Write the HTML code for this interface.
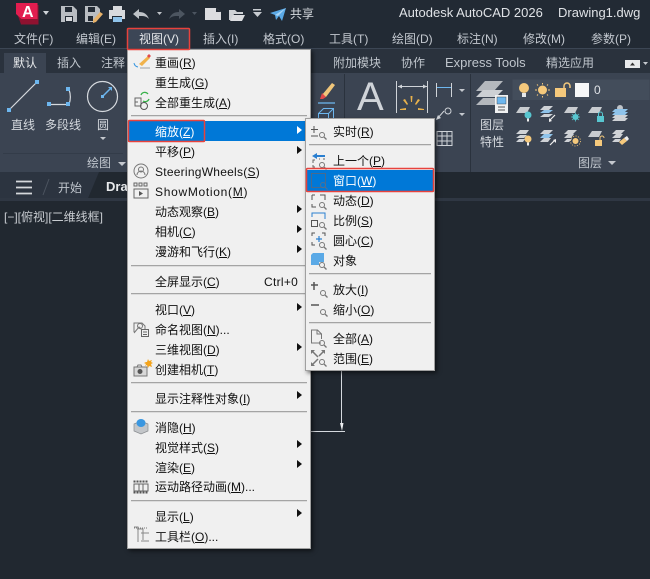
<!DOCTYPE html>
<html><head><meta charset="utf-8"><style>
html,body{margin:0;padding:0}
body{width:650px;height:579px;position:relative;overflow:hidden;background:#212830;font-family:"Liberation Sans","Noto Sans CJK SC",sans-serif;font-size:12px}
.a{position:absolute;white-space:nowrap;line-height:16px}
.m{color:#c3c8cf}
.t{color:#bfc5cc}
.r{color:#d5d9de}
.box{position:absolute}
.i{position:absolute;left:155px;color:#111;white-space:nowrap;line-height:16px;margin-top:1px}
.j{position:absolute;left:333px;color:#111;white-space:nowrap;line-height:16px;margin-top:1px}
u{text-underline-offset:1px}
.s{position:absolute;height:1px;background:#a4a4a4;box-shadow:0 1px 0 #dcdcdc}
.ms{left:131px;width:176px}
.ss{left:309px;width:122px}
.ar{position:absolute;width:0;height:0;border-left:5px solid #111;border-top:4px solid transparent;border-bottom:4px solid transparent;left:297px}
svg{position:absolute;left:0;top:0}
</style></head><body>
<div class="box" style="left:0;top:0;width:650px;height:48px;background:#222a34"></div>
<div class="box" style="left:0;top:48px;width:650px;height:1px;background:#3c4654"></div>
<div class="box" style="left:0;top:49px;width:650px;height:24px;background:#2a323d"></div>
<div class="box" style="left:4px;top:53px;width:42px;height:20px;background:#3b4452"></div>
<div class="box" style="left:0;top:73px;width:650px;height:99px;background:#3b4452"></div>
<div class="box" style="left:0;top:172px;width:650px;height:26px;background:#212830"></div>
<div class="box" style="left:0;top:198px;width:650px;height:3px;background:#2f3743"></div>
<div class="box" style="left:0;top:172px;width:99px;height:26px;background:#2c3440;clip-path:polygon(0 0,100% 0,89% 100%,0 100%)"></div>

<svg width="650" height="579" viewBox="0 0 650 579" fill="none">
<!-- logo -->
<path d="M16 10L21 24.500H38.500V5H16z" fill="#8f1230"/>
<path d="M16 3h21.500v16H21.500L16 14z" fill="#e21d4f"/>
<path d="M43 11h6l-3 4z" fill="#cfd3d8"/>
<!-- QAT -->
<path d="M61 6h12l4 4v12H61z" fill="#b9bdc2"/><path d="M65 7h7v5h-7zM65 16h8v6h-8z" fill="#222a34"/><path d="M66 17h6v4h-6z" fill="#d8dadd"/>
<path d="M85 6h12l3 3v7l-5 6H85z" fill="#b9bdc2"/><path d="M88 7h7v5h-7zM88 16h5v5h-5z" fill="#222a34"/><path d="M93 20l7-8 3 2-7 8-3 1z" fill="#e7b26a"/>
<path d="M113 6h9v4h-9z" fill="#d8dadd"/><path d="M109 10h16v9h-3v-3h-10v3h-3z" fill="#d8dadd"/><path d="M113 17h9v5h-9z" fill="#8fc3ea"/>
<path d="M133 14l6-5v3c5 0 8 2 10 7-3-3-5-3-10-3v3z" fill="#bfc3c8"/>
<path d="M157 12h5l-2.500 3z" fill="#bfc3c8"/>
<path d="M185 14l-6-5v3c-5 0-8 2-10 7 3-3 5-3 10-3v3z" fill="#4c5560"/>
<path d="M192 12h5l-2.500 3z" fill="#4c5560"/>
<path d="M205 8h11l5 4v8h-16z" fill="#dcdde0"/><path d="M216 8v4h5z" fill="#222a34"/>
<path d="M229 10h6l2 2h6v2h-9l-3 6h-2z" fill="#cfd2d6"/><path d="M233 15h12l-3 6h-12z" fill="#dcdde0"/>
<path d="M253 9h8v1.500h-8zM253 12h9l-4.500 5z" fill="#c8ccd1"/>
<path d="M270 13l16-5-4 13-3-5-3 4-1-5z" fill="#5aa9e6"/><path d="M278 16l8-8-11 7z" fill="#a8d4f4"/>

<!-- ribbon separators -->
<path d="M344.500 74v98M470.500 74v98" stroke="#2a323d"/>
<path d="M128 74v98" stroke="#2a323d"/>
<path d="M3 153.500h120" stroke="#333c49"/>
<!-- line tool -->
<path d="M9 110L36 83" stroke="#d5d9de" stroke-width="1.200"/>
<rect x="7" y="108" width="4" height="4" fill="#6db6ee"/><rect x="35" y="80" width="4" height="4" fill="#6db6ee"/>
<!-- polyline -->
<path d="M49 104.500h20a8 14 0 0 0 0-15" stroke="#d5d9de" stroke-width="1.200"/>
<rect x="47" y="102" width="4" height="4" fill="#6db6ee"/><rect x="66" y="102" width="4" height="4" fill="#6db6ee"/><rect x="66" y="87" width="4" height="4" fill="#6db6ee"/>
<!-- circle -->
<circle cx="102.500" cy="96.500" r="15" stroke="#d5d9de" stroke-width="1.200"/>
<path d="M103 96l7-7" stroke="#6db6ee" stroke-width="1.500"/><rect x="101" y="95" width="3" height="3" fill="#6db6ee"/><path d="M108 87h4v4z" fill="#6db6ee"/>
<path d="M100 137h6l-3 3z" fill="#c4c8ce"/>
<path d="M118 162h8l-4 4z" fill="#c4c8ce"/>
<!-- pen + cube -->
<path d="M322 95l10-12 3 2-9 12z" fill="#f0c67a"/><path d="M322 93l4 4-3 2h-3z" fill="#e24a4a"/><path d="M318 103h17" stroke="#6db6ee" stroke-width="1.300"/>
<path d="M318.500 113.500h10v10h-10zM318.500 113.500l5-5h10v10l-5 5M328.500 113.500l5-5" stroke="#6db6ee"/>
<!-- Annotation -->
<path d="M396.500 81v32M427.500 81v32" stroke="#cfd3d8"/><path d="M398 86.500h29" stroke="#cfd3d8"/><path d="M398 86.500l4-2v4zM427 86.500l-4-2v4z" fill="#cfd3d8"/>
<path d="M410.500 96h2l-.5 6h-1zM403 100l2-1 3 5-1 1zM420 100l-2-1-3 5 1 1zM400 109l6-1v2h-6zM424 109l-6-1v2h6z" fill="#eab24b"/>
<path d="M436.500 83v14M451.500 83v14" stroke="#cfd3d8"/><path d="M437 87.500h14" stroke="#6db6ee"/>
<path d="M459 89h6l-3 3z" fill="#c4c8ce"/><path d="M459 113h6l-3 3z" fill="#c4c8ce"/>
<path d="M437 119l7-8" stroke="#cfd3d8"/><circle cx="448" cy="111" r="3" stroke="#cfd3d8"/><path d="M436 120l2-5 3 3z" fill="#cfd3d8"/>
<path d="M437 131.500h15v14h-15zM437 136h15M437 141h15M442 131.500v14M447 131.500v14" stroke="#cfd3d8"/>
<!-- layer props -->
<path d="M476 91l9-10h18l-9 10z" fill="#b4b8bd"/><path d="M476 97l7-7h20l-7 7z" fill="#cdd0d4"/><path d="M476 105l7-7h20l-7 7z" fill="#b4b8bd"/>
<rect x="495" y="95" width="13" height="18" fill="#f0f1f2"/><rect x="497" y="97" width="9" height="7" fill="#6db6ee" stroke="#333" stroke-width=".4"/><path d="M498 107h7M498 110h7" stroke="#555"/>
<rect x="512.500" y="79.500" width="137" height="20.500" fill="#434d5b"/>
<circle cx="524" cy="88" r="5" fill="#f5c97c"/><rect x="522" y="93" width="4" height="4" fill="#e6e8ea"/>
<circle cx="542.500" cy="90" r="4.500" fill="#f5c97c"/><path d="M542.500 83v1.500M542.500 96v1.500M535 90h2M548 90h2M537 84.500l1 1M547 94.500l1 1M537 95.500l1-1M547 85.500l1-1" stroke="#f5c97c"/>
<rect x="555" y="88" width="11" height="9" fill="#f5c97c"/><path d="M564 88v-2a3 3 0 0 1 6 0v2" stroke="#f5c97c" stroke-width="1.500"/>
<rect x="575" y="83" width="14" height="14" fill="#f7f8f9"/>
<!-- layer icons -->
<path d="M516 113l4-6h10l-3 6z" fill="#c8cbcf"/><circle cx="528" cy="115" r="3.500" fill="#58c6d0"/><rect x="527" y="118.500" width="2" height="3" fill="#eee"/>
<path d="M540 110l4-4h9l-4 4z" fill="#cfd2d6"/><path d="M540 113l4-3h9l-4 3z" fill="#8fc3ea"/><path d="M540 117l4-3h9l-4 3z" fill="#cfd2d6"/><path d="M555 115l-5 5" stroke="#eee" stroke-width="1.200"/><path d="M549 122v-4l3 3z" fill="#eee"/>
<path d="M564 113l4-6h10l-3 6z" fill="#c8cbcf"/><circle cx="575.500" cy="117" r="3" fill="#58c6d0"/><path d="M575.500 112.500v9M571 117h9M572 114l7 6M572 120l7-6" stroke="#58c6d0" stroke-width=".8"/>
<path d="M588 113l4-6h10l-3 6z" fill="#c8cbcf"/><rect x="597" y="116" width="7" height="6" fill="#58c6d0"/><path d="M598.500 116v-2a2 2 0 0 1 4 0v2" stroke="#58c6d0"/>
<circle cx="620" cy="108" r="3" fill="#bfc3c8"/><path d="M612 112l3-3h13l-3 3z" fill="#8fc3ea"/><path d="M612 115l3-3h13l-3 3z" fill="#8fc3ea"/><path d="M612 118l3-3h13l-3 3zM612 121l3-3h13l-3 3z" fill="#cfd2d6"/>
<path d="M516 134l4-4h9l-3 4z" fill="#cfd2d6"/><path d="M516 138l4-3h7l-3 3zM516 142l3-3h6l-2 3z" fill="#cfd2d6"/><circle cx="528" cy="139" r="3.500" fill="#f5c97c"/><rect x="527" y="142.500" width="2" height="3" fill="#eee"/>
<path d="M540 134l4-4h9l-4 4z" fill="#cfd2d6"/><path d="M540 138l4-4h9l-4 4z" fill="#8fc3ea"/><path d="M540 142l4-4h7l-3 4z" fill="#cfd2d6"/><path d="M550 145l5-5" stroke="#eee" stroke-width="1.200"/><path d="M556 139v4l-3-3z" fill="#eee"/>
<path d="M564 134l4-4h9l-4 4z" fill="#cfd2d6"/><path d="M564 138l4-4h6l-3 4zM564 142l3-3h5l-3 3z" fill="#cfd2d6"/><circle cx="575.500" cy="141" r="3" fill="#f5c97c"/><circle cx="575.500" cy="141" r="5" stroke="#f5c97c" stroke-width=".8" stroke-dasharray="1.200 1.400"/>
<path d="M588 137l4-6h10l-3 6z" fill="#c8cbcf"/><rect x="595" y="140" width="7" height="6" fill="#f5c97c"/><path d="M600 140v-2a2 2 0 0 1 4 0" stroke="#f5c97c"/>
<path d="M612 134l4-4h9l-4 4z" fill="#cfd2d6"/><path d="M612 138l4-4h7l-3 4zM612 142l3-3h6l-2 3z" fill="#cfd2d6"/><path d="M619 142l5-4 3 3-5 4z" fill="#f5c97c"/><path d="M624 138l3-2 2 3-2 2z" fill="#eee"/>
<path d="M608 161h8l-4 4z" fill="#c4c8ce"/>
<!-- hamburger -->
<path d="M16 181.500h16M16 187.500h16M16 193.500h16" stroke="#d5d8dc" stroke-width="1.800"/>
<path d="M49 179l-6 16" stroke="#4c5560"/>
<!-- drawing dimension lines -->
<path d="M341.500 258v165" stroke="#d5d9de"/>
<path d="M311 431.500h34" stroke="#d5d9de"/>
<path d="M340 423h3.500l-1.500 8z" fill="#eceef0"/>
<rect x="625" y="60" width="15" height="8" fill="#e8eaec"/><path d="M630 65.500h5l-2.500-3z" fill="#333"/><path d="M643 62h5l-2.500 3z" fill="#c4c8ce"/>
</svg>

<span class="a m" style="left:290px;top:6px;color:#d5d9de">共享</span>
<span class="a" style="left:399px;top:5px;color:#dfe2e6;font-size:13px">Autodesk AutoCAD 2026</span>
<span class="a" style="left:558px;top:5px;color:#dfe2e6;font-size:13px">Drawing1.dwg</span>

<span class="a m" style="left:14px;top:31px">文件(F)</span>
<span class="a m" style="left:76px;top:31px">编辑(E)</span>
<div class="box" style="left:128px;top:29px;width:61px;height:19px;background:#3c4656"></div>
<span class="a" style="left:139px;top:31px;color:#e4e6e9">视图(V)</span>
<span class="a m" style="left:203px;top:31px">插入(I)</span>
<span class="a m" style="left:263px;top:31px">格式(O)</span>
<span class="a m" style="left:329px;top:31px">工具(T)</span>
<span class="a m" style="left:392px;top:31px">绘图(D)</span>
<span class="a m" style="left:457px;top:31px">标注(N)</span>
<span class="a m" style="left:523px;top:31px">修改(M)</span>
<span class="a m" style="left:591px;top:31px">参数(P)</span>

<span class="a" style="left:13px;top:55px;color:#e8eaec">默认</span>
<span class="a t" style="left:57px;top:55px">插入</span>
<span class="a t" style="left:101px;top:55px">注释</span>
<span class="a t" style="left:333px;top:55px">附加模块</span>
<span class="a t" style="left:401px;top:55px">协作</span>
<span class="a t" style="left:445px;top:55px;font-size:13px">Express Tools</span>
<span class="a t" style="left:546px;top:55px">精选应用</span>

<span class="a r" style="left:11px;top:117px">直线</span>
<span class="a r" style="left:45px;top:117px">多段线</span>
<span class="a r" style="left:97px;top:117px">圆</span>
<span class="a r" style="left:87px;top:155px;color:#bfc5cc">绘图</span>
<span class="a r" style="left:480px;top:117px">图层</span>
<span class="a r" style="left:480px;top:134px">特性</span>
<span class="a r" style="left:578px;top:155px;color:#bfc5cc">图层</span>
<span class="a" style="left:594px;top:82px;color:#dfe2e6">0</span>
<span class="a" style="left:357px;top:72px;color:#cfd3d8;font-size:40px;line-height:50px">A</span>
<span class="a" style="left:22px;top:3px;color:#fff;font-size:16px;line-height:20px;font-weight:bold">A</span>

<span class="a t" style="left:58px;top:180px">开始</span>
<span class="a" style="left:106px;top:179px;color:#e8eaec;font-size:13px;font-weight:bold">Dra</span>
<span class="a" style="left:4px;top:209px;color:#c8ccd1">[−][俯视][二维线框]</span>

<!-- main menu -->
<div class="box" style="left:127px;top:49px;width:182px;height:498px;background:#f0f0f0;border:1px solid #a0a0a0;box-shadow:2px 2px 4px rgba(0,0,0,.55)"></div>
<div class="box" style="left:128px;top:121px;width:177px;height:20px;background:#0078d7"></div>
<div class="s ms" style="top:115px"></div><div class="s ms" style="top:265px"></div><div class="s ms" style="top:293px"></div><div class="s ms" style="top:382px"></div><div class="s ms" style="top:411px"></div><div class="s ms" style="top:500px"></div>

<span class="i" style="top:54px">重画(<u>R</u>)</span>
<span class="i" style="top:74px">重生成(<u>G</u>)</span>
<span class="i" style="top:94px">全部重生成(<u>A</u>)</span>
<span class="i" style="top:123px;color:#fff">缩放(<u>Z</u>)</span>
<span class="i" style="top:143px">平移(<u>P</u>)</span>
<span class="i" style="top:163px;letter-spacing:.25px">SteeringWheels(<u>S</u>)</span>
<span class="i" style="top:183px;letter-spacing:.7px">ShowMotion(<u>M</u>)</span>
<span class="i" style="top:203px">动态观察(<u>B</u>)</span>
<span class="i" style="top:223px">相机(<u>C</u>)</span>
<span class="i" style="top:243px">漫游和飞行(<u>K</u>)</span>
<span class="i" style="top:273px">全屏显示(<u>C</u>)</span>
<span class="i" style="left:264px;top:273px;letter-spacing:.3px">Ctrl+0</span>
<span class="i" style="top:301px">视口(<u>V</u>)</span>
<span class="i" style="top:321px">命名视图(<u>N</u>)...</span>
<span class="i" style="top:341px">三维视图(<u>D</u>)</span>
<span class="i" style="top:361px">创建相机(<u>T</u>)</span>
<span class="i" style="top:390px">显示注释性对象(<u>I</u>)</span>
<span class="i" style="top:419px">消隐(<u>H</u>)</span>
<span class="i" style="top:439px">视觉样式(<u>S</u>)</span>
<span class="i" style="top:459px">渲染(<u>E</u>)</span>
<span class="i" style="top:478px">运动路径动画(<u>M</u>)...</span>
<span class="i" style="top:508px">显示(<u>L</u>)</span>
<span class="i" style="top:528px">工具栏(<u>O</u>)...</span>

<div class="ar" style="top:126px;border-left-color:#fff"></div>
<div class="ar" style="top:146px"></div><div class="ar" style="top:205px"></div><div class="ar" style="top:225px"></div><div class="ar" style="top:245px"></div>
<div class="ar" style="top:303px"></div><div class="ar" style="top:343px"></div><div class="ar" style="top:391px"></div>
<div class="ar" style="top:440px"></div><div class="ar" style="top:460px"></div><div class="ar" style="top:509px"></div>

<!-- submenu -->
<div class="box" style="left:305px;top:118px;width:128px;height:251px;background:#f0f0f0;border:1px solid #a0a0a0;box-shadow:2px 2px 4px rgba(0,0,0,.55)"></div>
<div class="box" style="left:306px;top:170px;width:127px;height:21px;background:#0078d7"></div>
<div class="s ss" style="top:144px"></div><div class="s ss" style="top:273px"></div><div class="s ss" style="top:322px"></div>

<span class="j" style="top:123px">实时(<u>R</u>)</span>
<span class="j" style="top:152px">上一个(<u>P</u>)</span>
<span class="j" style="top:172px;color:#fff">窗口(<u>W</u>)</span>
<span class="j" style="top:192px">动态(<u>D</u>)</span>
<span class="j" style="top:212px">比例(<u>S</u>)</span>
<span class="j" style="top:232px">圆心(<u>C</u>)</span>
<span class="j" style="top:252px">对象</span>
<span class="j" style="top:281px">放大(<u>I</u>)</span>
<span class="j" style="top:301px">缩小(<u>O</u>)</span>
<span class="j" style="top:330px">全部(<u>A</u>)</span>
<span class="j" style="top:350px">范围(<u>E</u>)</span>

<svg width="650" height="579" viewBox="0 0 650 579" fill="none">
<!-- main menu icons -->
<path d="M139 64l9-8 2 2-8 8z" fill="#f0b24b"/><path d="M147 56l2-2 2 2-2 2z" fill="#e24a4a"/><path d="M140 68h10" stroke="#9aa0a6"/><path d="M134 63a5 5 0 0 0 4 4" stroke="#3a97e0"/>
<path d="M135 98h6v8h-6zM138 102h-3" stroke="#666"/><path d="M141 95a4 4 0 0 1 7-1M149 99a4 4 0 0 1-6 2" stroke="#38b24a" stroke-width="1.300"/><circle cx="144" cy="106" r="3.500" stroke="#555"/>
<circle cx="141" cy="171" r="7" stroke="#777"/><circle cx="141" cy="169.500" r="2.500" stroke="#777"/><path d="M137 175a4 4 0 0 1 8 0" stroke="#777"/>
<path d="M134 183h3v3h-3zM139 183h3v3h-3zM144 183h3v3h-3zM134 189h14v9h-14z" stroke="#666"/><path d="M139 191l4 2.500-4 2.500z" fill="#555"/>
<path d="M134 332v-9h8l3 3v3" stroke="#777"/><path d="M134 333l5-6 3 3" stroke="#777"/><circle cx="140" cy="326" r="2.500" stroke="#777"/><rect x="141.500" y="329.500" width="7" height="7" fill="#f0f0f0" stroke="#666"/><path d="M143 332h4M143 334.500h4" stroke="#666"/>
<path d="M134 367h13v9h-13z" fill="#d8d8d8" stroke="#777"/><path d="M137 367l1-2h3l1 2" stroke="#777"/><circle cx="140" cy="371.500" r="2.500" fill="#555"/>
<path d="M147 362l1-3 1 2 3-1-1 2 2 1-2 1 1 3-3-1-1 2-1-3-2 1 1-2-2-1 2-1z" fill="#f3a31c"/>
<path d="M134 424l7-3 7 3v7l-7 3-7-3z" fill="#c3c6c9" stroke="#8a8d90" stroke-width=".7"/><ellipse cx="141" cy="423" rx="4.500" ry="4" fill="#3a97e0"/>
<path d="M133.500 481.500h15M133.500 492.500h15" stroke="#555" stroke-width="2" stroke-dasharray="2 1"/><path d="M134 484h14v7h-14zM139 484v7M143 484v7" stroke="#666"/>
<path d="M134 527h4v15M137 529h6v11M141 533h8M141 541h8" stroke="#888"/><path d="M134 528h13" stroke="#777" stroke-dasharray="1 1"/>
<!-- submenu icons -->
<path d="M314 126v7M311 129.500h7M311 136h7" stroke="#555"/>
<circle cx="322" cy="135" r="2.500" stroke="#777"/><path d="M324 137l2.500 2.500" stroke="#777" stroke-width="1.300"/>
<path d="M312 156l5-3v2h8v2h-8v2z" fill="#2a7fd0"/><path d="M313 163v-3h2M313 165v2h2M324 158v2M319 159h1" stroke="#666"/><circle cx="322" cy="165" r="2.500" stroke="#777"/><path d="M324 167l2.500 2.500" stroke="#777" stroke-width="1.300"/>
<path d="M311.500 173.500h14v14h-14z" stroke="#4a6a8c"/><circle cx="323" cy="185" r="2.500" stroke="#55708f"/><path d="M325 187l2.500 2.500" stroke="#55708f"/>
<path d="M312 195h3M312 195v5M312 204v3h4M320 195h5v5" stroke="#555"/><circle cx="322" cy="205" r="2.500" stroke="#777"/><path d="M324 207l2.500 2.500" stroke="#777" stroke-width="1.300"/>
<path d="M312 217v-4h13v6" stroke="#2a7fd0"/><rect x="311.500" y="220.500" width="6" height="6" stroke="#555"/><circle cx="322" cy="225" r="2.500" stroke="#777"/><path d="M324 227l2.500 2.500" stroke="#777" stroke-width="1.300"/>
<path d="M312 236v-3h3M322 233h3v3M312 242v3h3" stroke="#555"/><path d="M319 236v6M316 239h6" stroke="#2a7fd0" stroke-width="1.200"/><circle cx="322" cy="245" r="2.500" stroke="#777"/><path d="M324 247l2.500 2.500" stroke="#777" stroke-width="1.300"/>
<path d="M311 255l2-2h11v9h-13z" fill="#5aa9e6"/><path d="M311 262h8v3h-8z" fill="#5aa9e6"/><circle cx="322" cy="265" r="2.500" fill="#f0f0f0" stroke="#777"/><path d="M324 267l2.500 2.500" stroke="#777" stroke-width="1.300"/>
<path d="M314 282v8M311 285h7" stroke="#555" stroke-width="1.500"/><path d="M311 305h8" stroke="#555" stroke-width="1.500"/>
<circle cx="323" cy="293" r="2.500" stroke="#777"/><path d="M325 295l2.500 2.500" stroke="#777" stroke-width="1.300"/>
<circle cx="323" cy="312" r="2.500" stroke="#777"/><path d="M325 314l2.500 2.500" stroke="#777" stroke-width="1.300"/>
<path d="M321 343h-9.500v-13h6l4 4v5M317 330v4h5" stroke="#777"/><circle cx="322" cy="343" r="2.500" stroke="#777"/><path d="M324 345l2.500 2.500" stroke="#777" stroke-width="1.300"/>
<path d="M312 351l6 6M312 365l6-6M324 351l-5 5" stroke="#777" stroke-width="1.500"/><path d="M311 350h4l-4 4zM311 366h4l-4-4zM325 350h-4l4 4z" fill="#777"/><circle cx="322" cy="362" r="2.500" stroke="#777"/><path d="M324 364l2.500 2.500" stroke="#777" stroke-width="1.300"/>
<!-- red boxes -->
<rect x="127.500" y="28.500" width="62" height="21" rx="1" stroke="#e8423c" stroke-width="1.500"/>
<rect x="128.500" y="120.500" width="76" height="21" rx="1" stroke="#e8423c" stroke-width="1.500"/>
<rect x="306.500" y="168.500" width="127" height="23" rx="1" stroke="#e8423c" stroke-width="1.500"/>
</svg>
</body></html>
